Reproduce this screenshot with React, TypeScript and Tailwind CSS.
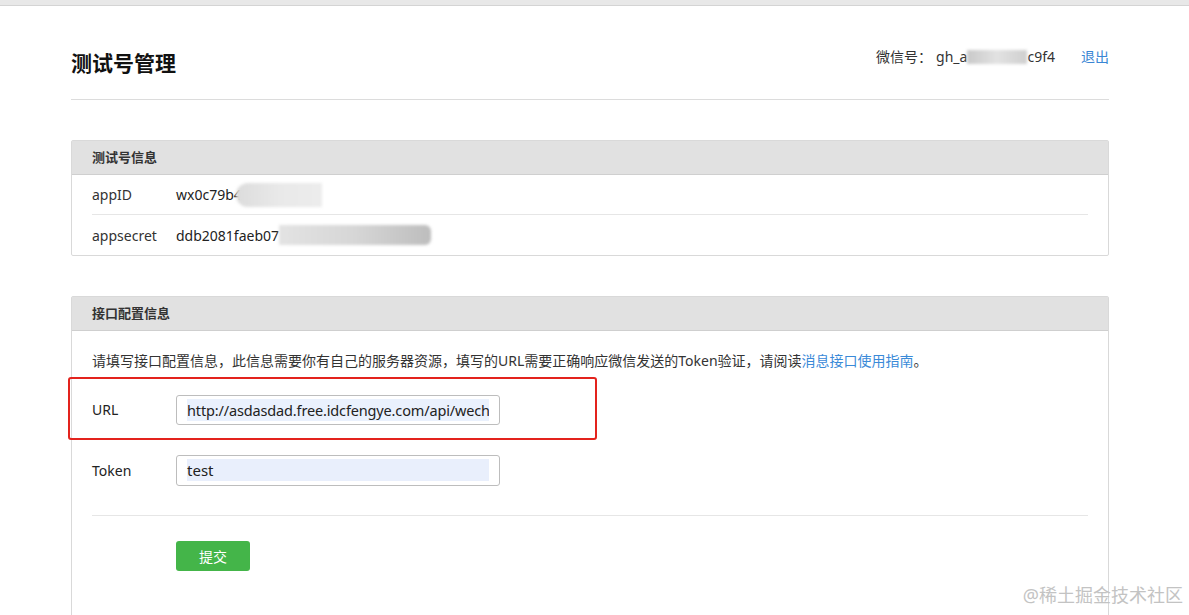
import React from "react";

const font = { fontFamily: '"Noto Sans", "Noto Sans CJK SC", sans-serif' };

function Blur({ className }: { className: string }) {
  return <span className={"inline-block align-middle blur-[1.5px] " + className} />;
}

export default function App() {
  return (
    <div className="relative h-[615px] w-[1189px] overflow-hidden bg-white text-[14px] text-[#222]" style={font}>
      <div className="h-[6px] border-b border-[#d4d4d4] bg-[#e8e8e8]" />

      <div className="ml-[71px] w-[1038px]">
        <div className="flex h-[94px] items-center justify-between border-b border-[#dcdcdc]">
          <h1 className="mt-[22px] text-[21px] font-bold text-[#111]">测试号管理</h1>
          <div className="mt-[8px] flex items-center text-[14px] text-[#333]">
            <span>微信号：</span>
            <span className="ml-[4px]">gh_a</span>
            <Blur className="h-[14px] w-[60px] bg-gradient-to-r from-[#c9c9c9] via-[#e2e2e2] to-[#cfcfcf]" />
            <span>c9f4</span>
            <a className="ml-[26px] text-[#3a86d4]">退出</a>
          </div>
        </div>

        <section className="mt-[40px] rounded-[2px] border border-[#d9d9d9]">
          <div className="flex h-[34px] items-center border-b border-[#cfcfcf] bg-[#e1e1e1] px-[20px] text-[13px] font-bold text-[#333]">
            测试号信息
          </div>
          <div className="mx-[20px]">
            <div className="flex h-[40px] items-center border-b border-[#e6e6e6]">
              <span className="w-[84px] text-[#333]">appID</span>
              <span>wx0c79b4</span>
              <Blur className="-ml-[6px] h-[24px] w-[86px] rounded-l-full bg-gradient-to-r from-[#dcdcdc] via-[#e9e9e9] to-[#ececec]" />
            </div>
            <div className="flex h-[40px] items-center">
              <span className="w-[84px] text-[#333]">appsecret</span>
              <span>ddb2081faeb07</span>
              <Blur className="h-[20px] w-[152px] rounded-r-[6px] bg-gradient-to-r from-[#e3e3e3] via-[#d6d6d6] to-[#bdbdbd]" />
            </div>
          </div>
        </section>

        <section className="mt-[40px] h-[400px] rounded-[2px] border border-[#d9d9d9]">
          <div className="flex h-[34px] items-center border-b border-[#cfcfcf] bg-[#e1e1e1] px-[20px] text-[13px] font-bold text-[#333]">
            接口配置信息
          </div>
          <div className="mx-[20px]">
            <p className="mt-[19px] text-[14px] text-[#333]">
              请填写接口配置信息，此信息需要你有自己的服务器资源，填写的URL需要正确响应微信发送的Token验证，请阅读
              <a className="text-[#3a8ad8]">消息接口使用指南</a>。
            </p>

            <div className="relative mt-[8px] flex h-[61px] items-center">
              <div className="absolute -left-[24px] top-[-2px] h-[63px] w-[529px] rounded-[3px] border-[2.5px] border-[#e3231d]" />
              <span className="w-[84px] text-[#222]">URL</span>
              <div className="flex h-[30px] w-[324px] items-center rounded-[3px] border border-[#bdbdbd] px-[10px]">
                <div className="h-[22px] w-full overflow-hidden whitespace-nowrap bg-[#eaf1fd] text-[14.5px] leading-[22px] tracking-[-0.15px] text-[#222]">
                  http://asdasdad.free.idcfengye.com/api/wech
                </div>
              </div>
            </div>

            <div className="border-b border-[#e6e6e6] pb-[15px]">
              <div className="flex h-[60px] items-center">
                <span className="w-[84px] text-[#222]">Token</span>
                <div className="flex h-[31px] w-[324px] items-center rounded-[3px] border border-[#bdbdbd] px-[10px]">
                  <div className="h-[22px] w-full bg-[#e9effc] text-[15px] leading-[22px] text-[#222]">test</div>
                </div>
              </div>
            </div>
            <div className="h-[25px]" />

            <div className="pl-[84px]">
              <button className="h-[30px] w-[74px] rounded-[3px] bg-[#44b549] text-[14px] text-white">提交</button>
            </div>
          </div>
        </section>
      </div>

      <div className="absolute right-[6px] bottom-[6px] text-[18px] text-[#c3c3c3]">@稀土掘金技术社区</div>
    </div>
  );
}
